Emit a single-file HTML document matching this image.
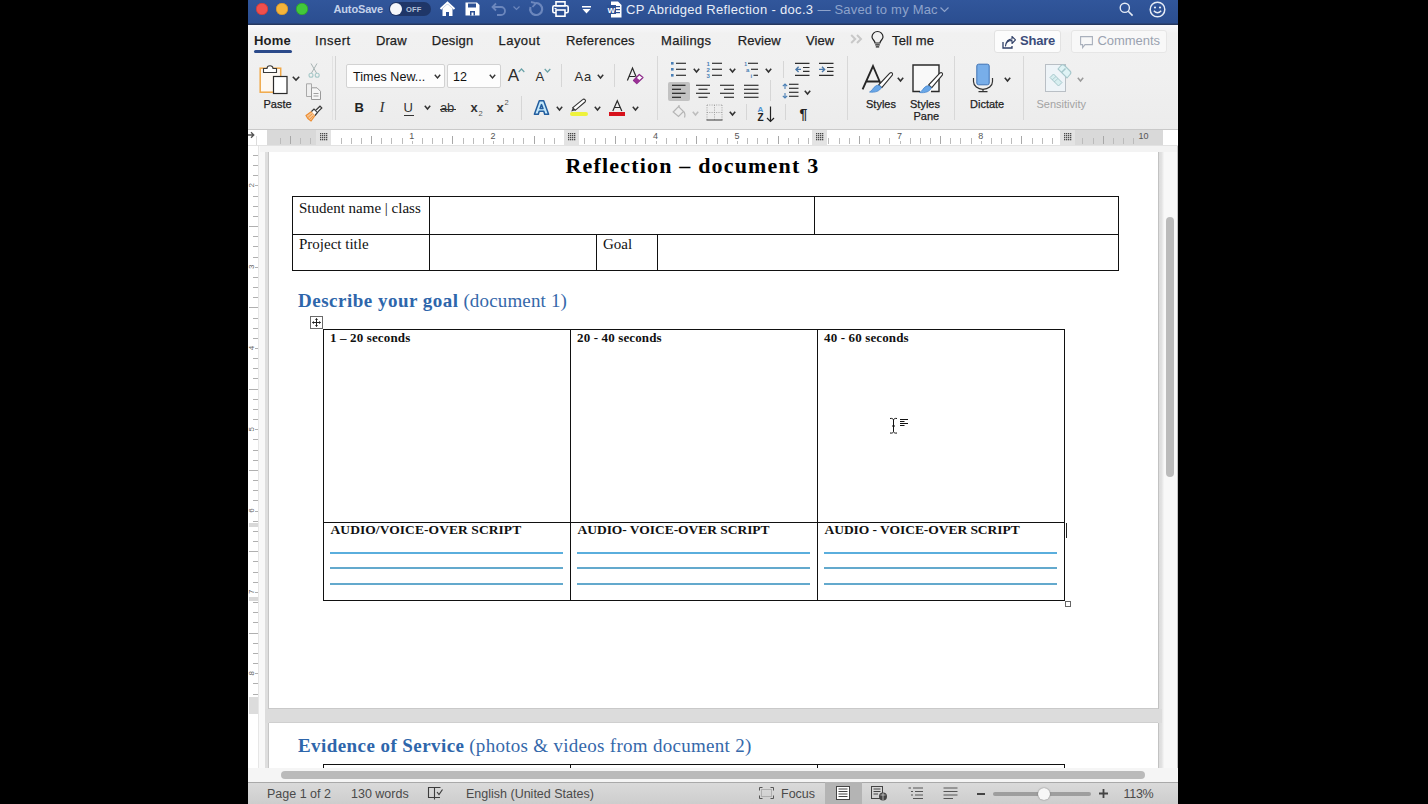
<!DOCTYPE html>
<html><head><meta charset="utf-8">
<style>
*{margin:0;padding:0;box-sizing:border-box}
html,body{width:1428px;height:804px;overflow:hidden;background:#000;font-family:"Liberation Sans",sans-serif}
.a{position:absolute}
svg.a{overflow:visible}
#win{position:absolute;left:248px;top:0;width:930px;height:804px;background:#f1f1f1;overflow:hidden}
.tab{position:absolute;top:33px;font-size:13px;color:#1e1e1e;-webkit-text-stroke:0.25px #1e1e1e;white-space:nowrap}
.lbl{position:absolute;font-size:11px;color:#1e1e1e;white-space:nowrap;-webkit-text-stroke:0.25px #1e1e1e}
.sep{position:absolute;width:1px;background:#d6d6d6}
.ser{font-family:"Liberation Serif",serif}
table.t{position:absolute;border-collapse:collapse}

</style></head><body>
<div id="win">
<div class="a" style="left:0.0px;top:0px;width:930px;height:25px;background:linear-gradient(#31569b,#2b4e90 92%,#26385f 96%)"></div>
<div class="a" style="left:8.0px;top:3px;width:12px;height:12px;border-radius:50%;background:#f04f4d;box-shadow:inset 0 0 0 0.6px #c23a38"></div>
<div class="a" style="left:28.0px;top:3px;width:12px;height:12px;border-radius:50%;background:#f4b43b;box-shadow:inset 0 0 0 0.6px #c98e2a"></div>
<div class="a" style="left:48.0px;top:3px;width:12px;height:12px;border-radius:50%;background:#42c83b;box-shadow:inset 0 0 0 0.6px #2c9a2a"></div>
<div class="a" style="left:85.5px;top:3px;font-size:11px;font-weight:bold;color:#c3d1ea;letter-spacing:-0.15px">AutoSave</div>
<div class="a" style="left:141.0px;top:2px;width:42px;height:14px;border-radius:7px;background:#1f3668"></div>
<div class="a" style="left:142.0px;top:3px;width:12px;height:12px;border-radius:50%;background:#f4f6fa"></div>
<div class="a" style="left:158.0px;top:4.5px;font-size:7.5px;font-weight:bold;color:#b5c2da;letter-spacing:0.2px">OFF</div>
<svg class="a" style="left:191.0px;top:1px" width="17" height="16" viewBox="0 0 17 16"><path d="M1.5 8 L8.5 1.5 L15.5 8" fill="none" stroke="#fff" stroke-width="2"/><path d="M3.5 7.5 V15 H7 V11 H10 V15 H13.5 V7.5 L8.5 3 Z" fill="#fff"/></svg>
<svg class="a" style="left:217.0px;top:2px" width="15" height="14" viewBox="0 0 15 14"><path d="M0.5 0.5 H12 L14.5 3 V13.5 H0.5 Z" fill="#fff"/><rect x="3" y="1.5" width="8" height="4" fill="#2c5094"/><rect x="5" y="9" width="5" height="4.5" fill="#2c5094"/><rect x="6.5" y="10.5" width="2" height="3" fill="#fff"/></svg>
<svg class="a" style="left:243.0px;top:2px" width="16" height="14" viewBox="0 0 16 14"><path d="M5 1.5 L1.5 5 L5 8.5 M1.5 5 H10 A4 4 0 0 1 10 13 H6" fill="none" stroke="#6c87bd" stroke-width="1.8"/></svg>
<svg class="a" style="left:265.0px;top:6px" width="7" height="5" viewBox="0 0 7 5"><path d="M0.5 0.5 L3.5 3.5 L6.5 0.5" fill="none" stroke="#6c87bd" stroke-width="1.2"/></svg>
<svg class="a" style="left:279.0px;top:1px" width="16" height="16" viewBox="0 0 16 16"><path d="M9 2 A6 6 0 1 1 3.5 6" fill="none" stroke="#6c87bd" stroke-width="2.2"/><path d="M4 1 L9 2.2 L5.5 6" fill="none" stroke="#6c87bd" stroke-width="1.8"/></svg>
<svg class="a" style="left:304.0px;top:1px" width="17" height="16" viewBox="0 0 17 16"><rect x="4" y="0.8" width="9" height="4" fill="none" stroke="#fff" stroke-width="1.6"/><rect x="0.8" y="4.8" width="15.4" height="7" rx="1.5" fill="none" stroke="#fff" stroke-width="1.6"/><rect x="4" y="9" width="9" height="6.2" fill="#2c5094" stroke="#fff" stroke-width="1.6"/><rect x="2.5" y="7" width="2" height="1" fill="#fff"/></svg>
<svg class="a" style="left:334.0px;top:6px" width="9" height="8" viewBox="0 0 9 8"><rect x="0" y="0" width="9" height="1.5" fill="#fff"/><path d="M0.5 3 H8.5 L4.5 7.5 Z" fill="#fff"/></svg>
<svg class="a" style="left:359.0px;top:1px" width="15" height="17" viewBox="0 0 15 17"><path d="M4 0.5 H11 L14.5 4 V16.5 H4 Z" fill="#fff"/><rect x="7" y="5" width="6" height="1.2" fill="#2c5094"/><rect x="7" y="8" width="6" height="1.2" fill="#2c5094"/><rect x="7" y="11" width="6" height="1.2" fill="#2c5094"/><rect x="0" y="4" width="9" height="9" fill="#2c5094"/><text x="0.5" y="11.5" font-family="Liberation Sans" font-size="8" font-weight="bold" fill="#fff">W</text></svg>
<div class="a" style="left:378.0px;top:2px;font-size:13px;color:#e9eef7;letter-spacing:0.33px;white-space:nowrap">CP Abridged Reflection - doc.3 <span style="color:#8ea3cb;letter-spacing:0.2px">— Saved to my Mac</span></div>
<svg class="a" style="left:692.0px;top:7px" width="9" height="6" viewBox="0 0 9 6"><path d="M0.5 0.5 L4.5 4.5 L8.5 0.5" fill="none" stroke="#8ea3cb" stroke-width="1.2"/></svg>
<svg class="a" style="left:871.0px;top:2px" width="15" height="15" viewBox="0 0 15 15"><circle cx="5.8" cy="5.8" r="4.6" fill="none" stroke="#e6ecf6" stroke-width="1.4"/><path d="M9.2 9.2 L13.6 13.6" stroke="#e6ecf6" stroke-width="1.6"/></svg>
<svg class="a" style="left:901.0px;top:1px" width="17" height="17" viewBox="0 0 17 17"><circle cx="8.5" cy="8.5" r="7.3" fill="none" stroke="#e6ecf6" stroke-width="1.5"/><circle cx="6" cy="6.5" r="1.1" fill="#e6ecf6"/><circle cx="11" cy="6.5" r="1.1" fill="#e6ecf6"/><path d="M4.8 9.8 Q8.5 13.8 12.2 9.8" fill="none" stroke="#e6ecf6" stroke-width="1.4"/></svg>
<div class="a" style="left:0.0px;top:25px;width:930px;height:105px;background:linear-gradient(#fbfbfd,#f6f6f8 3%,#f1f1f1 8%,#f0f0f0 50%,#ececec);border-bottom:1px solid #c9c9c9"></div>
<div class="tab" style="left:6.0px;letter-spacing:0.2px;font-weight:bold;-webkit-text-stroke:0;">Home</div>
<div class="tab" style="left:67.1px;letter-spacing:0.5px;">Insert</div>
<div class="tab" style="left:127.9px;letter-spacing:0.1px;">Draw</div>
<div class="tab" style="left:183.8px;letter-spacing:0.2px;">Design</div>
<div class="tab" style="left:250.6px;letter-spacing:0.43px;">Layout</div>
<div class="tab" style="left:317.9px;letter-spacing:0.25px;">References</div>
<div class="tab" style="left:413.1px;letter-spacing:0.33px;">Mailings</div>
<div class="tab" style="left:489.7px;letter-spacing:0.07px;">Review</div>
<div class="tab" style="left:558.0px;letter-spacing:0.1px;">View</div>
<div class="tab" style="left:644.1px;letter-spacing:0.12px;">Tell me</div>
<div class="a" style="left:6.0px;top:50px;width:38px;height:3px;border-radius:2px;background:#2b4a8a"></div>
<svg class="a" style="left:602.0px;top:34px" width="13" height="10" viewBox="0 0 13 10"><path d="M1.2 1 L5.2 5 L1.2 9 M7 1 L11 5 L7 9" fill="none" stroke="#c8c8c8" stroke-width="2"/></svg>
<svg class="a" style="left:623.0px;top:32px" width="13" height="16" viewBox="0 0 13 16"><path d="M4 11 C4 8.5 1 7.5 1 5 A5.5 5.5 0 0 1 12 5 C12 7.5 9 8.5 9 11 Z" fill="none" stroke="#222" stroke-width="1.2"/><path d="M4.2 12.8 H8.8 M4.8 14.8 H8.2" stroke="#222" stroke-width="1.2"/></svg>
<div class="a" style="left:746.0px;top:30px;width:67px;height:23px;background:#fcfcfc;border:1px solid #e2e2e2;border-radius:3px"></div>
<svg class="a" style="left:754.0px;top:36px" width="14" height="13" viewBox="0 0 14 13"><path d="M1 6 V12 H10 V10" fill="none" stroke="#2f3f66" stroke-width="1.3"/><path d="M3.5 10 C4 6 7 4.5 10 4.5 V7.5 L13.5 3.8 L10 0.5 V3 C6 3 4 6 3.5 10 Z" fill="none" stroke="#2f3f66" stroke-width="1.1" stroke-linejoin="round"/></svg>
<div class="a" style="left:772.0px;top:33px;font-size:13px;font-weight:bold;color:#3b4c7a;letter-spacing:-0.2px">Share</div>
<div class="a" style="left:823.0px;top:30px;width:96px;height:23px;background:#f8f8f8;border:1px solid #e6e6e6;border-radius:3px"></div>
<svg class="a" style="left:832.0px;top:36px" width="13" height="13" viewBox="0 0 13 13"><path d="M0.6 0.6 H12.4 V8.6 H5 L2.6 11.6 V8.6 H0.6 Z" fill="none" stroke="#a9b0bc" stroke-width="1.1"/></svg>
<div class="a" style="left:849.5px;top:33px;font-size:13px;color:#9aa2b0;letter-spacing:-0.05px">Comments</div>
<div class="a" style="left:409.0px;top:56px;width:1px;height:64px;background:#d8d8d8"></div>
<div class="a" style="left:599.0px;top:56px;width:1px;height:64px;background:#d8d8d8"></div>
<div class="a" style="left:706.0px;top:56px;width:1px;height:64px;background:#d8d8d8"></div>
<div class="a" style="left:775.0px;top:56px;width:1px;height:64px;background:#d8d8d8"></div>
<div class="a" style="left:83.5px;top:56px;width:1px;height:64px;background:#e2e2e2"></div>
<div class="a" style="left:87.0px;top:56px;width:1px;height:64px;background:#d4d4d4"></div>
<svg class="a" style="left:11.0px;top:63px" width="30" height="31" viewBox="0 0 30 31"><rect x="1.2" y="5.2" width="20.5" height="24" fill="#fdf8f2" stroke="#f0a848" stroke-width="1.5"/>
<path d="M4.5 9.5 V5.5 H8 A3 2.8 0 0 1 14 5.5 H17.5 V9.5 Z" fill="#fff" stroke="#3a3a3a" stroke-width="1.1"/>
<rect x="14.5" y="13.5" width="13.5" height="17" fill="#fff" stroke="#2a2a2a" stroke-width="1.2"/></svg>
<svg class="a" style="left:43.5px;top:76px" width="8" height="5" viewBox="0 0 8 5"><path d="M0.8 0.8 L4.0 4 L7.2 0.8" fill="none" stroke="#333" stroke-width="1.6"/></svg>
<div class="lbl" style="left:15.5px;top:98px">Paste</div>
<svg class="a" style="left:60.0px;top:63px" width="12" height="15" viewBox="0 0 12 15"><path d="M3 0.5 L8.5 10 M9 0.5 L3.5 10" stroke="#a8b4b4" stroke-width="1" fill="none"/><circle cx="3" cy="12.3" r="2" fill="none" stroke="#a6c8c8" stroke-width="1.1"/><circle cx="9.2" cy="12.3" r="2" fill="none" stroke="#a6c8c8" stroke-width="1.1"/></svg>
<svg class="a" style="left:57.0px;top:83px" width="18" height="17" viewBox="0 0 18 17"><path d="M1.5 0.8 H6.5 V13.5 H1.5 Z" fill="none" stroke="#a9a9a9" stroke-width="1"/><path d="M6.5 4.8 H12 L15.5 8.3 V16.5 H6.5 Z" fill="#f6f6f6" stroke="#9a9a9a" stroke-width="1"/><path d="M8.5 10.5 H13.5 M8.5 13 H13.5" stroke="#a0a0a0" stroke-width="1"/></svg>
<svg class="a" style="left:57.0px;top:105px" width="18" height="17" viewBox="0 0 18 17"><path d="M1 10.5 L6.5 6.5 L10 10.5 L6 16 C4 15 2 13 1 10.5 Z" fill="#f7c48f" stroke="#ec8d33" stroke-width="1.1"/><path d="M3 12.5 L7 9 M4.8 14.3 L8.3 10.8" stroke="#ec8d33" stroke-width="0.8"/><path d="M6.5 6.5 L9 4 L12.5 7.5 L10 10.5" fill="#fff" stroke="#3a3a3a" stroke-width="1.2"/><path d="M10.8 5.3 L15 1.2 L16.8 3 L12.6 7.1" fill="#fff" stroke="#3a3a3a" stroke-width="1.2"/></svg>
<div class="a" style="left:98.0px;top:64px;width:99px;height:24px;background:#fdfdfd;border:1px solid #d2d2d2;border-radius:2px"></div>
<div class="a" style="left:105.0px;top:70px;font-size:12.5px;color:#111;letter-spacing:0.05px;white-space:nowrap">Times New...</div>
<svg class="a" style="left:186.0px;top:74px" width="7" height="5" viewBox="0 0 7 5"><path d="M0.8 0.8 L3.5 4 L6.2 0.8" fill="none" stroke="#333" stroke-width="1.4"/></svg>
<div class="a" style="left:199.0px;top:64px;width:54px;height:24px;background:#fdfdfd;border:1px solid #d2d2d2;border-radius:2px"></div>
<div class="a" style="left:205.0px;top:70px;font-size:12.5px;color:#111">12</div>
<svg class="a" style="left:241.0px;top:74px" width="7" height="5" viewBox="0 0 7 5"><path d="M0.8 0.8 L3.5 4 L6.2 0.8" fill="none" stroke="#333" stroke-width="1.4"/></svg>
<div class="a" style="left:259.8px;top:65.5px;font-size:17px;color:#2a2a2a">A</div>
<svg class="a" style="left:270.0px;top:68px" width="7" height="5" viewBox="0 0 7 5"><path d="M0.7 4 L3.5 1 L6.3 4" fill="none" stroke="#6aa2a8" stroke-width="1.2"/></svg>
<div class="a" style="left:287.5px;top:68.5px;font-size:13px;color:#2a2a2a">A</div>
<svg class="a" style="left:296.0px;top:68px" width="7" height="5" viewBox="0 0 7 5"><path d="M0.7 1 L3.5 4 L6.3 1" fill="none" stroke="#6aa2a8" stroke-width="1.2"/></svg>
<div class="a" style="left:313.0px;top:64px;width:1px;height:23px;background:#d6d6d6"></div>
<div class="a" style="left:326.5px;top:69px;font-size:13px;color:#2a2a2a;letter-spacing:0.8px">Aa</div>
<svg class="a" style="left:348.5px;top:74px" width="7" height="5" viewBox="0 0 7 5"><path d="M0.8 0.8 L3.5 4 L6.2 0.8" fill="none" stroke="#333" stroke-width="1.5"/></svg>
<div class="a" style="left:366.0px;top:64px;width:1px;height:23px;background:#d6d6d6"></div>
<svg class="a" style="left:378.0px;top:66px" width="19" height="19" viewBox="0 0 19 19"><path d="M1.4 14.6 L6.5 2.1 L10.2 11 M3.2 10.5 H9" fill="none" stroke="#2a2a2a" stroke-width="1.2"/><path d="M7.5 14.5 L13.3 8.5 L17 11.5 L10.8 17.5 Z" fill="#fff" stroke="#8d2b8a" stroke-width="1.2" stroke-linejoin="round"/><path d="M7.5 14.5 L10.4 11.5 L14.1 14.5 L10.8 17.5 Z" fill="#9a3197"/></svg>
<div class="a" style="left:106.5px;top:100px;font-size:13px;font-weight:bold;color:#222">B</div>
<div class="a ser" style="left:131.5px;top:99px;font-size:15px;font-style:italic;color:#333">I</div>
<div class="a" style="left:155.5px;top:100px;font-size:13px;color:#333">U</div>
<div class="a" style="left:155.5px;top:114.5px;width:10px;height:1.2px;background:#333"></div>
<svg class="a" style="left:176.0px;top:105px" width="7" height="5" viewBox="0 0 7 5"><path d="M0.8 0.8 L3.5 4 L6.2 0.8" fill="none" stroke="#333" stroke-width="1.5"/></svg>
<div class="a" style="left:192.0px;top:99.5px;font-size:13px;color:#333;letter-spacing:-0.3px">ab</div>
<div class="a" style="left:191.5px;top:108.5px;width:16px;height:1.2px;background:#333"></div>
<div class="a" style="left:222.5px;top:100px;font-size:13px;font-weight:bold;color:#333">x</div>
<div class="a" style="left:230.5px;top:109px;font-size:7.5px;color:#555">2</div>
<div class="a" style="left:248.5px;top:100px;font-size:13px;font-weight:bold;color:#333">x</div>
<div class="a" style="left:256.5px;top:98px;font-size:7.5px;color:#555">2</div>
<div class="a" style="left:273.0px;top:96px;width:1px;height:24px;background:#d6d6d6"></div>
<svg class="a" style="left:284.0px;top:99px" width="18" height="17" viewBox="0 0 18 17"><path fill-rule="evenodd" d="M7.3 1.8 H11.7 L16.6 15.2 H12.7 L11.8 12.3 H7.2 L6.3 15.2 H2.4 Z M9.5 5.6 L11 9.6 H8 Z" fill="#c4e8fb" stroke="#225d9e" stroke-width="1.5" stroke-linejoin="round"/></svg>
<svg class="a" style="left:307.5px;top:106px" width="7" height="5" viewBox="0 0 7 5"><path d="M0.8 0.8 L3.5 4 L6.2 0.8" fill="none" stroke="#333" stroke-width="1.5"/></svg>
<svg class="a" style="left:322.0px;top:96px" width="18" height="17" viewBox="0 0 18 17"><path d="M2.8 11.7 L12.6 3.6 C13.4 2.9 14.3 2.9 15 3.7 C15.7 4.4 15.7 5.3 15 6 L5.2 14.3 Z" fill="#fff" stroke="#333" stroke-width="1.1"/><path d="M2.8 11.7 L1.2 15.6 L5.2 14.3 Z" fill="#444"/></svg>
<div class="a" style="left:322.0px;top:111.5px;width:18px;height:4.5px;border-radius:2px;background:#eef23c"></div>
<svg class="a" style="left:345.5px;top:106px" width="7" height="5" viewBox="0 0 7 5"><path d="M0.8 0.8 L3.5 4 L6.2 0.8" fill="none" stroke="#333" stroke-width="1.5"/></svg>
<svg class="a" style="left:364.0px;top:99px" width="11" height="13" viewBox="0 0 11 13"><path d="M0.8 12 L5.3 1.8 L9.8 12 M2.3 8.5 H8.3" fill="none" stroke="#2a2a2a" stroke-width="1.2"/></svg>
<div class="a" style="left:360.5px;top:112px;width:16.5px;height:4px;background:#d7121c"></div>
<svg class="a" style="left:383.5px;top:106px" width="7" height="5" viewBox="0 0 7 5"><path d="M0.8 0.8 L3.5 4 L6.2 0.8" fill="none" stroke="#333" stroke-width="1.5"/></svg>
<svg class="a" style="left:422.0px;top:61px" width="18" height="17" viewBox="0 0 18 17"><rect x="1" y="0.9999999999999998" width="2.6" height="2.6" fill="#4a7fb5"/><path d="M6 2.3 H16" stroke="#333" stroke-width="1.2"/><rect x="1" y="7.000000000000001" width="2.6" height="2.6" fill="#4a7fb5"/><path d="M6 8.3 H16" stroke="#333" stroke-width="1.2"/><rect x="1" y="13.0" width="2.6" height="2.6" fill="#4a7fb5"/><path d="M6 14.3 H16" stroke="#333" stroke-width="1.2"/></svg>
<svg class="a" style="left:444.5px;top:68px" width="7" height="5" viewBox="0 0 7 5"><path d="M0.8 0.8 L3.5 4 L6.2 0.8" fill="none" stroke="#333" stroke-width="1.6"/></svg>
<svg class="a" style="left:458.0px;top:61px" width="18" height="17" viewBox="0 0 18 17"><text x="0.5" y="5.1" font-family="Liberation Sans" font-size="6" font-weight="bold" fill="#4a7fb5">1</text><path d="M6 2.3 H16" stroke="#333" stroke-width="1.2"/><text x="0.5" y="11.100000000000001" font-family="Liberation Sans" font-size="6" font-weight="bold" fill="#4a7fb5">2</text><path d="M6 8.3 H16" stroke="#333" stroke-width="1.2"/><text x="0.5" y="17.1" font-family="Liberation Sans" font-size="6" font-weight="bold" fill="#4a7fb5">3</text><path d="M6 14.3 H16" stroke="#333" stroke-width="1.2"/></svg>
<svg class="a" style="left:481.0px;top:68px" width="7" height="5" viewBox="0 0 7 5"><path d="M0.8 0.8 L3.5 4 L6.2 0.8" fill="none" stroke="#333" stroke-width="1.6"/></svg>
<svg class="a" style="left:495.0px;top:61px" width="18" height="17" viewBox="0 0 18 17"><text x="1.2" y="4.5" font-family="Liberation Sans" font-size="5" font-weight="bold" fill="#4a7fb5">1</text><path d="M5 2.3 H15" stroke="#333" stroke-width="1.2"/><text x="3" y="10.5" font-family="Liberation Sans" font-size="6" font-weight="bold" fill="#4a7fb5">a</text><path d="M8 8.3 H15" stroke="#333" stroke-width="1.2"/><text x="7.5" y="16.5" font-family="Liberation Sans" font-size="6" font-weight="bold" fill="#4a7fb5">i</text><path d="M10.5 14.3 H15" stroke="#333" stroke-width="1.2"/></svg>
<svg class="a" style="left:517.0px;top:68px" width="7" height="5" viewBox="0 0 7 5"><path d="M0.8 0.8 L3.5 4 L6.2 0.8" fill="none" stroke="#333" stroke-width="1.6"/></svg>
<div class="a" style="left:535.0px;top:61px;width:1px;height:17px;background:#d6d6d6"></div>
<svg class="a" style="left:546.0px;top:61px" width="17" height="17" viewBox="0 0 17 17"><path d="M1 2.3 H15.5 M9 6.5 H15.5 M9 10.4 H15.5 M1 14.3 H15.5" stroke="#2e2e2e" stroke-width="1.2"/><path d="M2 8.4 H7 M4.6 5.8 L2 8.4 L4.6 11" fill="none" stroke="#4a78a8" stroke-width="1.4"/></svg>
<svg class="a" style="left:570.0px;top:61px" width="17" height="17" viewBox="0 0 17 17"><path d="M1 2.3 H15.5 M9 6.5 H15.5 M9 10.4 H15.5 M1 14.3 H15.5" stroke="#2e2e2e" stroke-width="1.2"/><path d="M1 8.4 H6.5 M4 5.8 L6.6 8.4 L4 11" fill="none" stroke="#4a78a8" stroke-width="1.4"/></svg>
<div class="a" style="left:420.0px;top:82px;width:21.5px;height:19px;background:#c2c2c2;border-radius:2px"></div>
<svg class="a" style="left:423.0px;top:84px" width="16" height="15" viewBox="0 0 16 15"><path d="M1 1.3 H14.5" stroke="#222" stroke-width="1.2"/><path d="M1 5.3 H10" stroke="#222" stroke-width="1.2"/><path d="M1 9.3 H14.5" stroke="#222" stroke-width="1.2"/><path d="M1 13.3 H10" stroke="#222" stroke-width="1.2"/></svg>
<svg class="a" style="left:447.0px;top:84px" width="16" height="15" viewBox="0 0 16 15"><path d="M1 1.3 H15" stroke="#333" stroke-width="1.2"/><path d="M3.5 5.3 H12.5" stroke="#333" stroke-width="1.2"/><path d="M1 9.3 H15" stroke="#333" stroke-width="1.2"/><path d="M3.5 13.3 H12.5" stroke="#333" stroke-width="1.2"/></svg>
<svg class="a" style="left:471.0px;top:84px" width="16" height="15" viewBox="0 0 16 15"><path d="M1 1.3 H15" stroke="#333" stroke-width="1.2"/><path d="M5 5.3 H15" stroke="#333" stroke-width="1.2"/><path d="M1 9.3 H15" stroke="#333" stroke-width="1.2"/><path d="M5 13.3 H15" stroke="#333" stroke-width="1.2"/></svg>
<svg class="a" style="left:495.0px;top:84px" width="16" height="15" viewBox="0 0 16 15"><path d="M1 1.3 H15.5" stroke="#333" stroke-width="1.2"/><path d="M1 5.3 H15.5" stroke="#333" stroke-width="1.2"/><path d="M1 9.3 H15.5" stroke="#333" stroke-width="1.2"/><path d="M1 13.3 H15.5" stroke="#333" stroke-width="1.2"/></svg>
<div class="a" style="left:522.0px;top:80px;width:1px;height:21px;background:#d6d6d6"></div>
<svg class="a" style="left:533.0px;top:82px" width="19" height="18" viewBox="0 0 19 18"><path d="M4 2 V7 M1.8 4.2 L4 2 L6.2 4.2 M4 11 V16 M1.8 13.8 L4 16 L6.2 13.8" fill="none" stroke="#4a7fb5" stroke-width="1.1"/><path d="M8 2.3 H17.5" stroke="#333" stroke-width="1.2"/><path d="M8 6.3 H17.5" stroke="#333" stroke-width="1.2"/><path d="M8 10.3 H17.5" stroke="#333" stroke-width="1.2"/><path d="M8 14.3 H17.5" stroke="#333" stroke-width="1.2"/></svg>
<svg class="a" style="left:555.5px;top:89.5px" width="7" height="5" viewBox="0 0 7 5"><path d="M0.8 0.8 L3.5 4 L6.2 0.8" fill="none" stroke="#333" stroke-width="1.6"/></svg>
<svg class="a" style="left:424.0px;top:104px" width="14" height="15" viewBox="0 0 14 15"><path d="M1.2 8 L6.5 2.5 L11.5 7.5 L6.5 12.5 Z" fill="none" stroke="#b5b5b5" stroke-width="1.2"/><path d="M7 1 V3.5 M11.5 7.5 C13 9 13 12 12.5 13.5" fill="none" stroke="#b5b5b5" stroke-width="1.2"/></svg>
<svg class="a" style="left:444.0px;top:110.5px" width="7" height="5" viewBox="0 0 7 5"><path d="M0.8 0.8 L3.5 4 L6.2 0.8" fill="none" stroke="#bdbdbd" stroke-width="1.6"/></svg>
<svg class="a" style="left:458.0px;top:104px" width="17" height="17" viewBox="0 0 17 17"><path d="M1 1 H16 M1 8.5 H16 M1 1 V16 M8.5 1 V16 M16 1 V16" stroke="#9a9a9a" stroke-width="0.9" stroke-dasharray="1 1.3"/><path d="M0.5 16 H16.5" stroke="#555" stroke-width="1.2"/></svg>
<svg class="a" style="left:481.0px;top:110.5px" width="7" height="5" viewBox="0 0 7 5"><path d="M0.8 0.8 L3.5 4 L6.2 0.8" fill="none" stroke="#333" stroke-width="1.6"/></svg>
<div class="a" style="left:498.0px;top:104px;width:1px;height:16px;background:#d6d6d6"></div>
<div class="a" style="left:509.5px;top:104.5px;font-size:8px;font-weight:bold;color:#4a8fd0">A</div>
<div class="a" style="left:509.5px;top:112px;font-size:10px;font-weight:bold;color:#222;line-height:11px">Z</div>
<svg class="a" style="left:518.0px;top:106px" width="9" height="17" viewBox="0 0 9 17"><path d="M4.5 0.5 V15.5 M1 12 L4.5 15.5 L8 12" fill="none" stroke="#222" stroke-width="1.2"/></svg>
<div class="a" style="left:537.0px;top:104px;width:1px;height:16px;background:#d6d6d6"></div>
<div class="a" style="left:551.5px;top:105.5px;font-size:14px;font-weight:bold;color:#222">¶</div>
<svg class="a" style="left:612.0px;top:63px" width="34" height="31" viewBox="0 0 34 31"><path d="M2.6 26.4 L13 3 L22 24 M6.5 18.5 H19" fill="none" stroke="#262626" stroke-width="1.9"/><path d="M29.8 10.2 C31.5 8.8 33.2 10.2 32.3 12.2 L21.8 24.6 L18.6 22 Z" fill="#fff" stroke="#2e2e2e" stroke-width="1.1" stroke-linejoin="round"/><path d="M9.5 29 C12 28.2 13 24.5 16 22.8 C18.2 21.6 20.8 22.6 21.3 24.6 C19.8 28.2 15 29.8 9.5 29 Z" fill="#69a7e8" stroke="#3f7fc9" stroke-width="0.7"/></svg>
<svg class="a" style="left:649.0px;top:76.5px" width="7" height="5" viewBox="0 0 7 5"><path d="M0.8 0.8 L3.5 4 L6.2 0.8" fill="none" stroke="#333" stroke-width="1.6"/></svg>
<div class="lbl" style="left:618.0px;top:98px">Styles</div>
<svg class="a" style="left:663.0px;top:63px" width="32" height="31" viewBox="0 0 32 31"><path d="M20 28.5 H28 V2 H2 V28.5 H9" fill="#f9f9f9" stroke="#2a2a2a" stroke-width="1.4"/><path d="M28.8 10.2 C30.5 8.8 32.2 10.2 31.3 12.2 L20.8 24.6 L17.6 22 Z" fill="#fff" stroke="#2e2e2e" stroke-width="1.1" stroke-linejoin="round"/><path d="M8.5 29.5 C11 28.7 12 25 15 23.3 C17.2 22.1 19.8 23.1 20.3 25.1 C18.8 28.7 14 30.3 8.5 29.5 Z" fill="#69a7e8" stroke="#3f7fc9" stroke-width="0.7"/></svg>
<div class="lbl" style="left:662.0px;top:98px">Styles</div>
<div class="lbl" style="left:665.5px;top:110px">Pane</div>
<svg class="a" style="left:724.0px;top:63px" width="21" height="30" viewBox="0 0 21 30"><rect x="4.8" y="1.2" width="12.4" height="20.6" rx="1.8" fill="#78aee9" stroke="#3f73b5" stroke-width="1"/><path d="M1.5 15 V18.5 A9.5 7.8 0 0 0 20.5 18.5 V15" fill="none" stroke="#333" stroke-width="1.2"/><path d="M11 26.3 V28.6 M6.5 28.6 H15.5" stroke="#333" stroke-width="1.2"/></svg>
<svg class="a" style="left:755.5px;top:76.5px" width="7" height="5" viewBox="0 0 7 5"><path d="M0.8 0.8 L3.5 4 L6.2 0.8" fill="none" stroke="#333" stroke-width="1.6"/></svg>
<div class="lbl" style="left:722.0px;top:98px">Dictate</div>
<svg class="a" style="left:796.0px;top:62px" width="30" height="31" viewBox="0 0 30 31"><rect x="1.5" y="2.5" width="20" height="27" fill="#eef4f8" stroke="#b9bfc5" stroke-width="1"/><path d="M6 15.5 L9.5 12 L18 20.5 L14.5 24 Z" fill="#d7eef0" stroke="#a7c8cc" stroke-width="1"/><path d="M8 18 L12 14.5 M10 20 L14 16.5" stroke="#a7c8cc" stroke-width="0.8"/><path d="M14 7 L17 3.5 C18 2.5 19.5 2.5 20.5 3.5 L26 9 C27 10 27 11.5 26 12.5 L23 16 Z" fill="#dff3f5" stroke="#a7c8cc" stroke-width="1.1"/><path d="M17.5 10.5 L21.5 6.5" stroke="#a7c8cc" stroke-width="1.6"/></svg>
<svg class="a" style="left:828.5px;top:76.5px" width="7" height="5" viewBox="0 0 7 5"><path d="M0.8 0.8 L3.5 4 L6.2 0.8" fill="none" stroke="#9a9a9a" stroke-width="1.5"/></svg>
<div class="lbl" style="left:788.5px;top:98px;color:#a3a3a3;-webkit-text-stroke:0">Sensitivity</div>
<div class="a" style="left:0.0px;top:130px;width:930px;height:16px;background:#fff"></div>
<div class="a" style="left:19.0px;top:130px;width:64px;height:15px;background:#d9d9d9"></div>
<div class="a" style="left:812.5px;top:130px;width:102px;height:15px;background:#d9d9d9"></div>
<svg class="a" style="left:0;top:0" width="930" height="150"><path d="M32.5 138 V144" stroke="#bbb" stroke-width="1"/><path d="M42.5 136 V144" stroke="#a8a8a8" stroke-width="1"/><path d="M52.5 138 V144" stroke="#bbb" stroke-width="1"/><path d="M62.5 138 V144" stroke="#bbb" stroke-width="1"/><path d="M72.5 138 V144" stroke="#bbb" stroke-width="1"/><path d="M82.5 141 V144" stroke="#bbb" stroke-width="1"/><path d="M93.5 138 V144" stroke="#bbb" stroke-width="1"/><path d="M103.5 138 V144" stroke="#bbb" stroke-width="1"/><path d="M113.5 138 V144" stroke="#bbb" stroke-width="1"/><path d="M123.5 136 V144" stroke="#a8a8a8" stroke-width="1"/><path d="M133.5 138 V144" stroke="#bbb" stroke-width="1"/><path d="M143.5 138 V144" stroke="#bbb" stroke-width="1"/><path d="M154.5 138 V144" stroke="#bbb" stroke-width="1"/><path d="M164.5 141 V144" stroke="#bbb" stroke-width="1"/><path d="M174.5 138 V144" stroke="#bbb" stroke-width="1"/><path d="M184.5 138 V144" stroke="#bbb" stroke-width="1"/><path d="M194.5 138 V144" stroke="#bbb" stroke-width="1"/><path d="M204.5 136 V144" stroke="#a8a8a8" stroke-width="1"/><path d="M215.5 138 V144" stroke="#bbb" stroke-width="1"/><path d="M225.5 138 V144" stroke="#bbb" stroke-width="1"/><path d="M235.5 138 V144" stroke="#bbb" stroke-width="1"/><path d="M245.5 141 V144" stroke="#bbb" stroke-width="1"/><path d="M255.5 138 V144" stroke="#bbb" stroke-width="1"/><path d="M265.5 138 V144" stroke="#bbb" stroke-width="1"/><path d="M275.5 138 V144" stroke="#bbb" stroke-width="1"/><path d="M286.5 136 V144" stroke="#a8a8a8" stroke-width="1"/><path d="M296.5 138 V144" stroke="#bbb" stroke-width="1"/><path d="M306.5 138 V144" stroke="#bbb" stroke-width="1"/><path d="M316.5 138 V144" stroke="#bbb" stroke-width="1"/><path d="M326.5 141 V144" stroke="#bbb" stroke-width="1"/><path d="M336.5 138 V144" stroke="#bbb" stroke-width="1"/><path d="M347.5 138 V144" stroke="#bbb" stroke-width="1"/><path d="M357.5 138 V144" stroke="#bbb" stroke-width="1"/><path d="M367.5 136 V144" stroke="#a8a8a8" stroke-width="1"/><path d="M377.5 138 V144" stroke="#bbb" stroke-width="1"/><path d="M387.5 138 V144" stroke="#bbb" stroke-width="1"/><path d="M397.5 138 V144" stroke="#bbb" stroke-width="1"/><path d="M408.5 141 V144" stroke="#bbb" stroke-width="1"/><path d="M418.5 138 V144" stroke="#bbb" stroke-width="1"/><path d="M428.5 138 V144" stroke="#bbb" stroke-width="1"/><path d="M438.5 138 V144" stroke="#bbb" stroke-width="1"/><path d="M448.5 136 V144" stroke="#a8a8a8" stroke-width="1"/><path d="M458.5 138 V144" stroke="#bbb" stroke-width="1"/><path d="M469.5 138 V144" stroke="#bbb" stroke-width="1"/><path d="M479.5 138 V144" stroke="#bbb" stroke-width="1"/><path d="M489.5 141 V144" stroke="#bbb" stroke-width="1"/><path d="M499.5 138 V144" stroke="#bbb" stroke-width="1"/><path d="M509.5 138 V144" stroke="#bbb" stroke-width="1"/><path d="M519.5 138 V144" stroke="#bbb" stroke-width="1"/><path d="M530.5 136 V144" stroke="#a8a8a8" stroke-width="1"/><path d="M540.5 138 V144" stroke="#bbb" stroke-width="1"/><path d="M550.5 138 V144" stroke="#bbb" stroke-width="1"/><path d="M560.5 138 V144" stroke="#bbb" stroke-width="1"/><path d="M570.5 141 V144" stroke="#bbb" stroke-width="1"/><path d="M580.5 138 V144" stroke="#bbb" stroke-width="1"/><path d="M591.5 138 V144" stroke="#bbb" stroke-width="1"/><path d="M601.5 138 V144" stroke="#bbb" stroke-width="1"/><path d="M611.5 136 V144" stroke="#a8a8a8" stroke-width="1"/><path d="M621.5 138 V144" stroke="#bbb" stroke-width="1"/><path d="M631.5 138 V144" stroke="#bbb" stroke-width="1"/><path d="M641.5 138 V144" stroke="#bbb" stroke-width="1"/><path d="M652.5 141 V144" stroke="#bbb" stroke-width="1"/><path d="M662.5 138 V144" stroke="#bbb" stroke-width="1"/><path d="M672.5 138 V144" stroke="#bbb" stroke-width="1"/><path d="M682.5 138 V144" stroke="#bbb" stroke-width="1"/><path d="M692.5 136 V144" stroke="#a8a8a8" stroke-width="1"/><path d="M702.5 138 V144" stroke="#bbb" stroke-width="1"/><path d="M712.5 138 V144" stroke="#bbb" stroke-width="1"/><path d="M723.5 138 V144" stroke="#bbb" stroke-width="1"/><path d="M733.5 141 V144" stroke="#bbb" stroke-width="1"/><path d="M743.5 138 V144" stroke="#bbb" stroke-width="1"/><path d="M753.5 138 V144" stroke="#bbb" stroke-width="1"/><path d="M763.5 138 V144" stroke="#bbb" stroke-width="1"/><path d="M773.5 136 V144" stroke="#a8a8a8" stroke-width="1"/><path d="M784.5 138 V144" stroke="#bbb" stroke-width="1"/><path d="M794.5 138 V144" stroke="#bbb" stroke-width="1"/><path d="M804.5 138 V144" stroke="#bbb" stroke-width="1"/><path d="M814.5 141 V144" stroke="#bbb" stroke-width="1"/><path d="M824.5 138 V144" stroke="#bbb" stroke-width="1"/><path d="M834.5 138 V144" stroke="#bbb" stroke-width="1"/><path d="M845.5 138 V144" stroke="#bbb" stroke-width="1"/><path d="M855.5 136 V144" stroke="#a8a8a8" stroke-width="1"/><path d="M865.5 138 V144" stroke="#bbb" stroke-width="1"/><path d="M875.5 138 V144" stroke="#bbb" stroke-width="1"/><path d="M885.5 138 V144" stroke="#bbb" stroke-width="1"/><text x="163.70" y="138.5" text-anchor="middle" font-family="Liberation Sans" font-size="9" fill="#555">1</text><text x="245.00" y="138.5" text-anchor="middle" font-family="Liberation Sans" font-size="9" fill="#555">2</text><text x="407.60" y="138.5" text-anchor="middle" font-family="Liberation Sans" font-size="9" fill="#555">4</text><text x="488.90" y="138.5" text-anchor="middle" font-family="Liberation Sans" font-size="9" fill="#555">5</text><text x="651.50" y="138.5" text-anchor="middle" font-family="Liberation Sans" font-size="9" fill="#555">7</text><text x="732.80" y="138.5" text-anchor="middle" font-family="Liberation Sans" font-size="9" fill="#555">8</text><text x="895.40" y="138.5" text-anchor="middle" font-family="Liberation Sans" font-size="9" fill="#555">10</text></svg>
<div class="a" style="left:68.0px;top:130px;width:15px;height:15px;background:#e3e3e3"></div>
<svg class="a" style="left:72.0px;top:133px" width="8" height="8" viewBox="0 0 8 8"><rect x="0" y="0" width="1.3" height="1.3" fill="#4a4a4a"/><rect x="2" y="0" width="1.3" height="1.3" fill="#4a4a4a"/><rect x="4" y="0" width="1.3" height="1.3" fill="#4a4a4a"/><rect x="6" y="0" width="1.3" height="1.3" fill="#4a4a4a"/><rect x="0" y="2" width="1.3" height="1.3" fill="#4a4a4a"/><rect x="2" y="2" width="1.3" height="1.3" fill="#4a4a4a"/><rect x="4" y="2" width="1.3" height="1.3" fill="#4a4a4a"/><rect x="6" y="2" width="1.3" height="1.3" fill="#4a4a4a"/><rect x="0" y="4" width="1.3" height="1.3" fill="#4a4a4a"/><rect x="2" y="4" width="1.3" height="1.3" fill="#4a4a4a"/><rect x="4" y="4" width="1.3" height="1.3" fill="#4a4a4a"/><rect x="6" y="4" width="1.3" height="1.3" fill="#4a4a4a"/><rect x="0" y="6" width="1.3" height="1.3" fill="#4a4a4a"/><rect x="2" y="6" width="1.3" height="1.3" fill="#4a4a4a"/><rect x="4" y="6" width="1.3" height="1.3" fill="#4a4a4a"/><rect x="6" y="6" width="1.3" height="1.3" fill="#4a4a4a"/></svg>
<div class="a" style="left:316.0px;top:130px;width:15px;height:15px;background:#e3e3e3"></div>
<svg class="a" style="left:320.0px;top:133px" width="8" height="8" viewBox="0 0 8 8"><rect x="0" y="0" width="1.3" height="1.3" fill="#4a4a4a"/><rect x="2" y="0" width="1.3" height="1.3" fill="#4a4a4a"/><rect x="4" y="0" width="1.3" height="1.3" fill="#4a4a4a"/><rect x="6" y="0" width="1.3" height="1.3" fill="#4a4a4a"/><rect x="0" y="2" width="1.3" height="1.3" fill="#4a4a4a"/><rect x="2" y="2" width="1.3" height="1.3" fill="#4a4a4a"/><rect x="4" y="2" width="1.3" height="1.3" fill="#4a4a4a"/><rect x="6" y="2" width="1.3" height="1.3" fill="#4a4a4a"/><rect x="0" y="4" width="1.3" height="1.3" fill="#4a4a4a"/><rect x="2" y="4" width="1.3" height="1.3" fill="#4a4a4a"/><rect x="4" y="4" width="1.3" height="1.3" fill="#4a4a4a"/><rect x="6" y="4" width="1.3" height="1.3" fill="#4a4a4a"/><rect x="0" y="6" width="1.3" height="1.3" fill="#4a4a4a"/><rect x="2" y="6" width="1.3" height="1.3" fill="#4a4a4a"/><rect x="4" y="6" width="1.3" height="1.3" fill="#4a4a4a"/><rect x="6" y="6" width="1.3" height="1.3" fill="#4a4a4a"/></svg>
<div class="a" style="left:564.0px;top:130px;width:15px;height:15px;background:#e3e3e3"></div>
<svg class="a" style="left:568.0px;top:133px" width="8" height="8" viewBox="0 0 8 8"><rect x="0" y="0" width="1.3" height="1.3" fill="#4a4a4a"/><rect x="2" y="0" width="1.3" height="1.3" fill="#4a4a4a"/><rect x="4" y="0" width="1.3" height="1.3" fill="#4a4a4a"/><rect x="6" y="0" width="1.3" height="1.3" fill="#4a4a4a"/><rect x="0" y="2" width="1.3" height="1.3" fill="#4a4a4a"/><rect x="2" y="2" width="1.3" height="1.3" fill="#4a4a4a"/><rect x="4" y="2" width="1.3" height="1.3" fill="#4a4a4a"/><rect x="6" y="2" width="1.3" height="1.3" fill="#4a4a4a"/><rect x="0" y="4" width="1.3" height="1.3" fill="#4a4a4a"/><rect x="2" y="4" width="1.3" height="1.3" fill="#4a4a4a"/><rect x="4" y="4" width="1.3" height="1.3" fill="#4a4a4a"/><rect x="6" y="4" width="1.3" height="1.3" fill="#4a4a4a"/><rect x="0" y="6" width="1.3" height="1.3" fill="#4a4a4a"/><rect x="2" y="6" width="1.3" height="1.3" fill="#4a4a4a"/><rect x="4" y="6" width="1.3" height="1.3" fill="#4a4a4a"/><rect x="6" y="6" width="1.3" height="1.3" fill="#4a4a4a"/></svg>
<div class="a" style="left:812.0px;top:130px;width:15px;height:15px;background:#e3e3e3"></div>
<svg class="a" style="left:816.0px;top:133px" width="8" height="8" viewBox="0 0 8 8"><rect x="0" y="0" width="1.3" height="1.3" fill="#4a4a4a"/><rect x="2" y="0" width="1.3" height="1.3" fill="#4a4a4a"/><rect x="4" y="0" width="1.3" height="1.3" fill="#4a4a4a"/><rect x="6" y="0" width="1.3" height="1.3" fill="#4a4a4a"/><rect x="0" y="2" width="1.3" height="1.3" fill="#4a4a4a"/><rect x="2" y="2" width="1.3" height="1.3" fill="#4a4a4a"/><rect x="4" y="2" width="1.3" height="1.3" fill="#4a4a4a"/><rect x="6" y="2" width="1.3" height="1.3" fill="#4a4a4a"/><rect x="0" y="4" width="1.3" height="1.3" fill="#4a4a4a"/><rect x="2" y="4" width="1.3" height="1.3" fill="#4a4a4a"/><rect x="4" y="4" width="1.3" height="1.3" fill="#4a4a4a"/><rect x="6" y="4" width="1.3" height="1.3" fill="#4a4a4a"/><rect x="0" y="6" width="1.3" height="1.3" fill="#4a4a4a"/><rect x="2" y="6" width="1.3" height="1.3" fill="#4a4a4a"/><rect x="4" y="6" width="1.3" height="1.3" fill="#4a4a4a"/><rect x="6" y="6" width="1.3" height="1.3" fill="#4a4a4a"/></svg>
<div class="a" style="left:0.0px;top:145px;width:930px;height:1px;background:#e2e2e2"></div>
<svg class="a" style="left:0.0px;top:130px" width="8" height="9" viewBox="0 0 8 9"><path d="M0 5 H5.5 M3 2.2 L5.8 5 L3 7.8" fill="none" stroke="#555" stroke-width="1.3"/></svg>
<div class="a" style="left:8.0px;top:136px;width:1px;height:9px;background:#dcdcdc"></div>
<div class="a" style="left:0.0px;top:146px;width:930px;height:622px;background:#e9e9e9"></div>
<div class="a" style="left:0.0px;top:146px;width:11px;height:622px;background:#fff"></div>
<div class="a" style="left:10.0px;top:146px;width:1px;height:622px;background:#e6e6e6"></div>
<div class="a" style="left:11.0px;top:146px;width:6px;height:622px;background:#f8f8f8"></div>
<svg class="a" style="left:0;top:0;" width="20" height="804" viewBox="248 0 20 804"><path d="M253 155.5 H258" stroke="#b0b0b0" stroke-width="1"/><path d="M253 165.5 H258" stroke="#b0b0b0" stroke-width="1"/><path d="M253 175.5 H258" stroke="#b0b0b0" stroke-width="1"/><text transform="translate(251.5 185.4) rotate(-90)" text-anchor="middle" font-family="Liberation Sans" font-size="8" fill="#666" y="2.5">2</text><path d="M255 185.5 H258" stroke="#b0b0b0" stroke-width="1"/><path d="M253 196.5 H258" stroke="#b0b0b0" stroke-width="1"/><path d="M253 206.5 H258" stroke="#b0b0b0" stroke-width="1"/><path d="M253 216.5 H258" stroke="#b0b0b0" stroke-width="1"/><path d="M249 226.5 H258" stroke="#b0b0b0" stroke-width="1"/><path d="M253 236.5 H258" stroke="#b0b0b0" stroke-width="1"/><path d="M253 246.5 H258" stroke="#b0b0b0" stroke-width="1"/><path d="M253 257.5 H258" stroke="#b0b0b0" stroke-width="1"/><text transform="translate(251.5 266.7) rotate(-90)" text-anchor="middle" font-family="Liberation Sans" font-size="8" fill="#666" y="2.5">3</text><path d="M255 267.5 H258" stroke="#b0b0b0" stroke-width="1"/><path d="M253 277.5 H258" stroke="#b0b0b0" stroke-width="1"/><path d="M253 287.5 H258" stroke="#b0b0b0" stroke-width="1"/><path d="M253 297.5 H258" stroke="#b0b0b0" stroke-width="1"/><path d="M249 307.5 H258" stroke="#b0b0b0" stroke-width="1"/><path d="M253 318.5 H258" stroke="#b0b0b0" stroke-width="1"/><path d="M253 328.5 H258" stroke="#b0b0b0" stroke-width="1"/><path d="M253 338.5 H258" stroke="#b0b0b0" stroke-width="1"/><text transform="translate(251.5 348.0) rotate(-90)" text-anchor="middle" font-family="Liberation Sans" font-size="8" fill="#666" y="2.5">4</text><path d="M255 348.5 H258" stroke="#b0b0b0" stroke-width="1"/><path d="M253 358.5 H258" stroke="#b0b0b0" stroke-width="1"/><path d="M253 368.5 H258" stroke="#b0b0b0" stroke-width="1"/><path d="M253 378.5 H258" stroke="#b0b0b0" stroke-width="1"/><path d="M249 389.5 H258" stroke="#b0b0b0" stroke-width="1"/><path d="M253 399.5 H258" stroke="#b0b0b0" stroke-width="1"/><path d="M253 409.5 H258" stroke="#b0b0b0" stroke-width="1"/><path d="M253 419.5 H258" stroke="#b0b0b0" stroke-width="1"/><text transform="translate(251.5 429.3) rotate(-90)" text-anchor="middle" font-family="Liberation Sans" font-size="8" fill="#666" y="2.5">5</text><path d="M255 429.5 H258" stroke="#b0b0b0" stroke-width="1"/><path d="M253 439.5 H258" stroke="#b0b0b0" stroke-width="1"/><path d="M253 450.5 H258" stroke="#b0b0b0" stroke-width="1"/><path d="M253 460.5 H258" stroke="#b0b0b0" stroke-width="1"/><path d="M249 470.5 H258" stroke="#b0b0b0" stroke-width="1"/><path d="M253 480.5 H258" stroke="#b0b0b0" stroke-width="1"/><path d="M253 490.5 H258" stroke="#b0b0b0" stroke-width="1"/><path d="M253 500.5 H258" stroke="#b0b0b0" stroke-width="1"/><text transform="translate(251.5 510.6) rotate(-90)" text-anchor="middle" font-family="Liberation Sans" font-size="8" fill="#666" y="2.5">6</text><path d="M255 511.5 H258" stroke="#b0b0b0" stroke-width="1"/><path d="M253 521.5 H258" stroke="#b0b0b0" stroke-width="1"/><path d="M253 531.5 H258" stroke="#b0b0b0" stroke-width="1"/><path d="M253 541.5 H258" stroke="#b0b0b0" stroke-width="1"/><path d="M249 551.5 H258" stroke="#b0b0b0" stroke-width="1"/><path d="M253 561.5 H258" stroke="#b0b0b0" stroke-width="1"/><path d="M253 572.5 H258" stroke="#b0b0b0" stroke-width="1"/><path d="M253 582.5 H258" stroke="#b0b0b0" stroke-width="1"/><text transform="translate(251.5 591.9) rotate(-90)" text-anchor="middle" font-family="Liberation Sans" font-size="8" fill="#666" y="2.5">7</text><path d="M255 592.5 H258" stroke="#b0b0b0" stroke-width="1"/><path d="M253 602.5 H258" stroke="#b0b0b0" stroke-width="1"/><path d="M253 612.5 H258" stroke="#b0b0b0" stroke-width="1"/><path d="M253 622.5 H258" stroke="#b0b0b0" stroke-width="1"/><path d="M249 633.5 H258" stroke="#b0b0b0" stroke-width="1"/><path d="M253 643.5 H258" stroke="#b0b0b0" stroke-width="1"/><path d="M253 653.5 H258" stroke="#b0b0b0" stroke-width="1"/><path d="M253 663.5 H258" stroke="#b0b0b0" stroke-width="1"/><text transform="translate(251.5 673.2) rotate(-90)" text-anchor="middle" font-family="Liberation Sans" font-size="8" fill="#666" y="2.5">8</text><path d="M255 673.5 H258" stroke="#b0b0b0" stroke-width="1"/><path d="M253 683.5 H258" stroke="#b0b0b0" stroke-width="1"/><path d="M253 694.5 H258" stroke="#b0b0b0" stroke-width="1"/></svg>
<div class="a" style="left:1.0px;top:523px;width:9px;height:4px;background:#d8d8d8"></div>
<div class="a" style="left:1.0px;top:597px;width:9px;height:4px;background:#d8d8d8"></div>
<div class="a" style="left:1.0px;top:697px;width:9px;height:17px;background:#dcdcdc"></div>
<div class="a" style="left:17.0px;top:152px;width:4px;height:616px;background:linear-gradient(90deg,#dedede 70%,#c6c6c6 75%)"></div>
<div class="a" style="left:21.0px;top:152px;width:889px;height:557px;background:#fff"></div>
<div class="a" style="left:11.5px;top:146px;width:918.5px;height:6px;background:#f3f3f3"></div>
<div class="a" style="left:910.0px;top:152px;width:6px;height:616px;background:linear-gradient(90deg,#c2c2c2 16%,#dcdcdc 17%,#e2e2e2 60%,#f6f6f6)"></div>
<div class="a" style="left:21.0px;top:708px;width:889px;height:1px;background:#c9c9c9"></div>
<div class="a" style="left:17.0px;top:709px;width:897px;height:14px;background:#dcdcdc"></div>
<div class="a" style="left:21.0px;top:722px;width:889px;height:1px;background:#cfcfcf"></div>
<div class="a" style="left:21.0px;top:723px;width:889px;height:45px;background:#fff"></div>
<div class="a" style="left:916.0px;top:152px;width:13px;height:616px;background:#f8f8f8"></div>
<div class="a" style="left:929.0px;top:146px;width:1px;height:622px;background:#c4c4c4"></div>
<div class="a" style="left:918.0px;top:217px;width:8px;height:260px;border-radius:4px;background:#bbbbbb"></div>
<div class="a ser" style="left:317.5px;top:152.5px;font-size:22px;font-weight:bold;color:#000;letter-spacing:1.18px;white-space:nowrap">Reflection – document 3</div>
<div class="a" style="left:44.0px;top:196px;width:827px;height:75px;border:1px solid #111"></div>
<div class="a" style="left:44.0px;top:234px;width:827px;height:1px;background:#111"></div>
<div class="a" style="left:181.0px;top:196px;width:1px;height:74px;background:#111"></div>
<div class="a" style="left:566.0px;top:196px;width:1px;height:38px;background:#111"></div>
<div class="a" style="left:348.0px;top:234px;width:1px;height:36px;background:#111"></div>
<div class="a" style="left:409.0px;top:234px;width:1px;height:36px;background:#111"></div>
<div class="a ser" style="left:51.0px;top:199.5px;font-size:15px;color:#111;white-space:nowrap">Student name | class</div>
<div class="a ser" style="left:51.0px;top:236px;font-size:15px;color:#111;white-space:nowrap">Project title</div>
<div class="a ser" style="left:355.0px;top:236px;font-size:15px;color:#111;white-space:nowrap">Goal</div>
<div class="a ser" style="left:50.0px;top:290px;font-size:19px;color:#3568aa;white-space:nowrap"><b style="color:#2e66ab;letter-spacing:0.5px">Describe your goal</b> <span style="letter-spacing:0.15px">(document 1)</span></div>
<svg class="a" style="left:62.0px;top:316px" width="13" height="13" viewBox="0 0 13 13"><rect x="0.5" y="0.5" width="12" height="12" fill="#fff" stroke="#6a6a6a" stroke-width="1"/><path d="M6.5 2.5 V10.5 M2.5 6.5 H10.5" stroke="#222" stroke-width="1"/><path d="M5 4 L6.5 2 L8 4 Z M5 9 L6.5 11 L8 9 Z M4 5 L2 6.5 L4 8 Z M9 5 L11 6.5 L9 8 Z" fill="#222"/></svg>
<div class="a" style="left:75.0px;top:329px;width:742px;height:271.5px;border:1px solid #111"></div>
<div class="a" style="left:75.0px;top:522px;width:742px;height:1px;background:#111"></div>
<div class="a" style="left:322.0px;top:329px;width:1px;height:271px;background:#111"></div>
<div class="a" style="left:569.0px;top:329px;width:1px;height:271px;background:#111"></div>
<div class="a ser" style="left:82.0px;top:329.5px;font-size:13px;font-weight:bold;color:#111;letter-spacing:0.14px;white-space:nowrap">1 – 20 seconds</div>
<div class="a ser" style="left:82.5px;top:521.8px;font-size:13.5px;font-weight:bold;color:#111;letter-spacing:0.07px;white-space:nowrap">AUDIO/VOICE-OVER SCRIPT</div>
<div class="a" style="left:82.0px;top:552px;width:233px;height:2px;background:#5aaedd"></div>
<div class="a" style="left:82.0px;top:567px;width:233px;height:2px;background:#63a9cd"></div>
<div class="a" style="left:82.0px;top:583px;width:233px;height:2px;background:#63a9cd"></div>
<div class="a ser" style="left:329.0px;top:329.5px;font-size:13px;font-weight:bold;color:#111;letter-spacing:0.14px;white-space:nowrap">20 - 40 seconds</div>
<div class="a ser" style="left:329.5px;top:521.8px;font-size:13.5px;font-weight:bold;color:#111;letter-spacing:-0.04px;white-space:nowrap">AUDIO- VOICE-OVER SCRIPT</div>
<div class="a" style="left:329.0px;top:552px;width:233px;height:2px;background:#5aaedd"></div>
<div class="a" style="left:329.0px;top:567px;width:233px;height:2px;background:#63a9cd"></div>
<div class="a" style="left:329.0px;top:583px;width:233px;height:2px;background:#63a9cd"></div>
<div class="a ser" style="left:576.0px;top:329.5px;font-size:13px;font-weight:bold;color:#111;letter-spacing:0.14px;white-space:nowrap">40 - 60 seconds</div>
<div class="a ser" style="left:576.5px;top:521.8px;font-size:13.5px;font-weight:bold;color:#111;letter-spacing:-0.05px;white-space:nowrap">AUDIO - VOICE-OVER SCRIPT</div>
<div class="a" style="left:576.0px;top:552px;width:233px;height:2px;background:#5aaedd"></div>
<div class="a" style="left:576.0px;top:567px;width:233px;height:2px;background:#63a9cd"></div>
<div class="a" style="left:576.0px;top:583px;width:233px;height:2px;background:#63a9cd"></div>
<div class="a" style="left:818.0px;top:523px;width:1px;height:15px;background:#222"></div>
<div class="a" style="left:817.0px;top:601px;width:6px;height:6px;border:1px solid #666;background:#fff"></div>
<svg class="a" style="left:641.0px;top:417px" width="9" height="17" viewBox="0 0 9 17"><path d="M1 1.5 C3 1 4.5 2 4.5 3 C4.5 2 6 1 8 1.5 M4.5 3 V14.5 M1 16 C3 16.5 4.5 15.5 4.5 14.5 C4.5 15.5 6 16.5 8 16 M3 9 H6" fill="none" stroke="#111" stroke-width="1"/></svg>
<svg class="a" style="left:652.0px;top:418px" width="9" height="8" viewBox="0 0 9 8"><path d="M0 1.5 H8 M0 3.5 H4.5 M0 5.5 H8 M0 7.5 H4.5" stroke="#111" stroke-width="1"/></svg>
<div class="a ser" style="left:50.0px;top:735px;font-size:19px;color:#3568aa;white-space:nowrap"><b style="color:#2e66ab;letter-spacing:0.43px">Evidence of Service</b> <span style="letter-spacing:0.29px">(photos &amp; videos from document 2)</span></div>
<div class="a" style="left:75.0px;top:764px;width:742px;height:1px;background:#111"></div>
<div class="a" style="left:322.0px;top:764px;width:1px;height:4px;background:#111"></div>
<div class="a" style="left:75.0px;top:764px;width:1px;height:4px;background:#111"></div>
<div class="a" style="left:816.0px;top:764px;width:1px;height:4px;background:#111"></div>
<div class="a" style="left:569.0px;top:764px;width:1px;height:4px;background:#111"></div>
<div class="a" style="left:0.0px;top:768px;width:930px;height:14px;background:#f5f5f5"></div>
<div class="a" style="left:33.0px;top:771px;width:864px;height:8px;border-radius:4px;background:#bababa"></div>
<div class="a" style="left:0.0px;top:782px;width:930px;height:22px;background:linear-gradient(#dadada,#cdcdcd);border-top:1px solid #a9a9a9"></div>
<div class="a" style="left:19.0px;top:787px;font-size:12.5px;color:#4a4a4a;white-space:nowrap">Page 1 of 2</div>
<div class="a" style="left:103.0px;top:787px;font-size:12.5px;color:#4a4a4a;white-space:nowrap">130 words</div>
<svg class="a" style="left:179.0px;top:786px" width="17" height="15" viewBox="0 0 17 15"><path d="M7.5 13.5 V1.5 H1.5 V11.5 H7.5 M7.5 1.5 H13.5 M7.5 11.5 H13" fill="none" stroke="#3c3c3c" stroke-width="1.1"/><path d="M10 6 L12 8.5 L15.5 3.5" fill="none" stroke="#3c3c3c" stroke-width="1.2"/></svg>
<div class="a" style="left:218.0px;top:787px;font-size:12.5px;color:#4a4a4a;white-space:nowrap">English (United States)</div>
<svg class="a" style="left:511.0px;top:787px" width="15" height="12" viewBox="0 0 15 12"><path d="M0.5 3.5 V0.5 H3.5 M11.5 0.5 H14.5 V3.5 M14.5 8.5 V11.5 H11.5 M3.5 11.5 H0.5 V8.5" fill="none" stroke="#555" stroke-width="1"/><rect x="2.5" y="2.5" width="10" height="7" fill="none" stroke="#777" stroke-width="0.8" stroke-dasharray="1 1"/></svg>
<div class="a" style="left:533.0px;top:787px;font-size:12.5px;color:#4a4a4a;white-space:nowrap">Focus</div>
<div class="a" style="left:577.0px;top:782px;width:37px;height:22px;background:#b4b4b4"></div>
<svg class="a" style="left:588.0px;top:786px" width="14" height="14" viewBox="0 0 14 14"><rect x="0.5" y="0.5" width="13" height="13" fill="#fff" stroke="#444" stroke-width="1"/><path d="M2.5 3 H11.5 M2.5 5.5 H11.5 M2.5 8 H11.5 M2.5 10.5 H11.5" stroke="#444" stroke-width="1"/></svg>
<svg class="a" style="left:623.0px;top:786px" width="17" height="15" viewBox="0 0 17 15"><rect x="0.5" y="0.5" width="11" height="12" fill="none" stroke="#444" stroke-width="1"/><path d="M2.5 3 H9.5 M2.5 5.5 H9.5 M2.5 8 H7" stroke="#444" stroke-width="1"/><circle cx="12" cy="10.5" r="4" fill="#444"/><path d="M9.5 9 H14.5 M12 7 V14" stroke="#ddd" stroke-width="0.7"/></svg>
<svg class="a" style="left:660.0px;top:787px" width="16" height="13" viewBox="0 0 16 13"><path d="M0.5 1 H3 M5 1 H15 M3 4.5 H5 M7 4.5 H15 M3 8 H5 M7 8 H15 M5 11.5 H15" stroke="#555" stroke-width="1"/></svg>
<svg class="a" style="left:695.0px;top:787px" width="15" height="13" viewBox="0 0 15 13"><path d="M0.5 1 H14.5 M0.5 4.5 H14.5 M0.5 8 H14.5 M0.5 11.5 H10" stroke="#555" stroke-width="1"/></svg>
<div class="a" style="left:729.0px;top:792.5px;width:8px;height:2px;background:#444"></div>
<div class="a" style="left:745.0px;top:791.5px;width:98px;height:4px;border-radius:2px;background:#9e9e9e"></div>
<div class="a" style="left:789.5px;top:787.5px;width:12px;height:12px;border-radius:50%;background:#f7f7f7;box-shadow:0 0 1.5px #666"></div>
<svg class="a" style="left:851.0px;top:789px" width="9" height="9" viewBox="0 0 9 9"><path d="M4.5 0 V9 M0 4.5 H9" stroke="#444" stroke-width="1.8"/></svg>
<div class="a" style="left:875.5px;top:787px;font-size:12.5px;color:#4a4a4a;white-space:nowrap;letter-spacing:-0.3px">113%</div>
</div>
</body></html>
